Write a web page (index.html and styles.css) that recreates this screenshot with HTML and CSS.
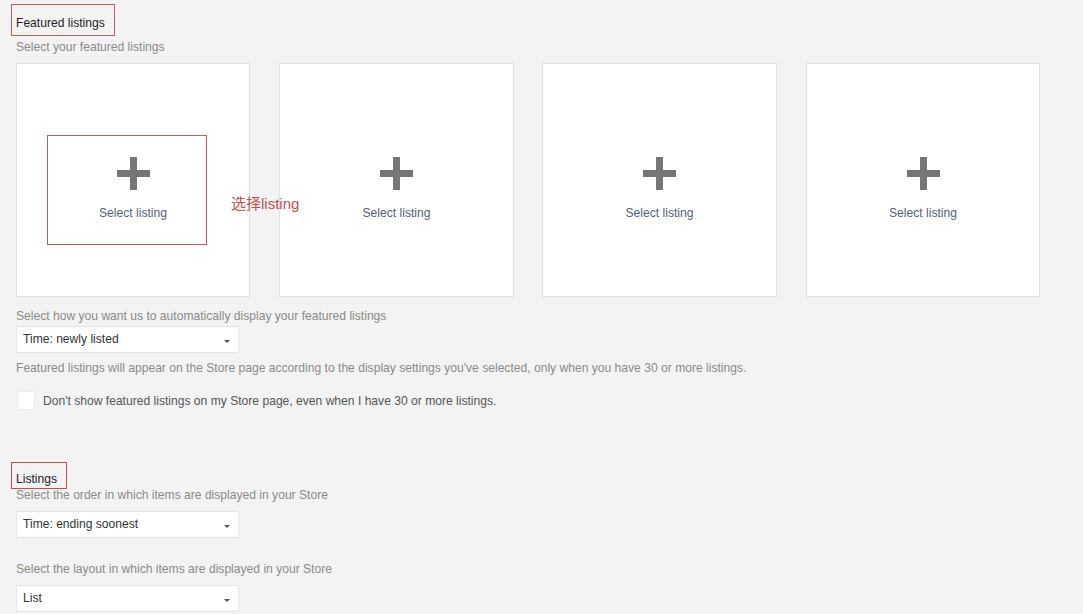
FILE: index.html
```html
<!DOCTYPE html>
<html lang="en">
<head>
    <meta charset="UTF-8">
    <title>Store settings</title>
    <link rel="stylesheet" href="styles.css">
</head>
<body>
<div class="page">
    <div class="section featured">
        <h2 class="title mark">Featured listings</h2>
        <p class="hint">Select your featured listings</p>
        <ul class="cards">
            <li class="card">
                <span class="plus"></span>
                <span class="card-text">Select listing</span>
                <div class="card-mark"></div>
                <span class="note">选择listing</span>
            </li>
            <li class="card">
                <span class="plus"></span>
                <span class="card-text">Select listing</span>
            </li>
            <li class="card">
                <span class="plus"></span>
                <span class="card-text">Select listing</span>
            </li>
            <li class="card">
                <span class="plus"></span>
                <span class="card-text">Select listing</span>
            </li>
        </ul>
        <p class="hint hint-gap">Select how you want us to automatically display your featured listings</p>
        <div class="select">Time: newly listed<span class="caret"></span></div>
        <p class="hint info">Featured listings will appear on the Store page according to the display settings you've selected, only when you have 30 or more listings.</p>
        <label class="check">
            <span class="box"></span>
            <span>Don't show featured listings on my Store page, even when I have 30 or more listings.</span>
        </label>
    </div>
    <div class="section listings">
        <h2 class="title mark mark-small">Listings</h2>
        <p class="hint tight">Select the order in which items are displayed in your Store</p>
        <div class="select select-order">Time: ending soonest<span class="caret"></span></div>
        <p class="hint hint-layout">Select the layout in which items are displayed in your Store</p>
        <div class="select">List<span class="caret"></span></div>
    </div>
</div>
</body>
</html>
```

FILE: styles.css
```css
* {
    padding: 0;
    margin: 0;
    list-style: none;
    box-sizing: border-box;
}

body {
    background: #f3f3f3;
    font-family: "Liberation Sans", Arial, sans-serif;
    font-size: 12.1px;
    color: #333;
    overflow: hidden;
}

.page {
    padding: 4px 0 0 16px;
}

.title {
    font-size: 12.1px;
    font-weight: normal;
    line-height: 16px;
    color: #222;
}

/* red annotation boxes */
.mark {
    display: inline-block;
    margin-left: -5px;
    padding: 10px 9px 4px 4px;
    border: 1px solid #b9615c;
}

.mark-small {
    padding: 8px 9px 1px 4px;
    border-color: #c0504d;
}

.hint {
    color: #8a8a8a;
    line-height: 16px;
}

.featured .hint:first-of-type {
    margin-top: 3px;
}

.cards {
    display: flex;
    gap: 29px;
    margin-top: 8px;
}

.card {
    position: relative;
    width: 234px;
    height: 234px;
    background: #fff;
    border: 1px solid #e2e2e2;
    display: flex;
    flex-direction: column;
    align-items: center;
    padding-top: 93px;
}

.card:nth-child(2),
.card:nth-child(3) {
    width: 235px;
}

.card:nth-child(3) {
    margin-left: -1px;
}

.plus {
    position: relative;
    width: 33px;
    height: 33px;
}

.plus::before,
.plus::after {
    content: "";
    position: absolute;
    background: #767676;
}

.plus::before {
    left: 0;
    top: 13px;
    width: 33px;
    height: 7px;
}

.plus::after {
    left: 13px;
    top: 0;
    width: 7px;
    height: 33px;
}

.card-text {
    margin-top: 15px;
    color: #4f6178;
    line-height: 16px;
}

.card-mark {
    position: absolute;
    left: 30px;
    top: 71px;
    width: 160px;
    height: 110px;
    border: 1px solid #b9615c;
}

.note {
    position: absolute;
    z-index: 1;
    left: 214px;
    top: 128px;
    white-space: nowrap;
    color: #c0504d;
    font-size: 15px;
    font-family: "Liberation Sans", "Noto Sans CJK SC", sans-serif;
}

.hint-gap {
    margin-top: 11px;
}

.select {
    position: relative;
    width: 223px;
    height: 27px;
    margin-top: 2px;
    padding-left: 6px;
    line-height: 25px;
    background: #fff;
    border: 1px solid #e6e6e6;
    color: #333;
}

.caret {
    position: absolute;
    right: 8px;
    top: 13px;
    border-left: 3px solid transparent;
    border-right: 3px solid transparent;
    border-top: 3px solid #555;
}

.info {
    margin-top: 7px;
}

.check {
    display: flex;
    align-items: center;
    gap: 8px;
    margin-top: 15px;
    color: #555;
    line-height: 16px;
}

.check .box {
    width: 18px;
    height: 19px;
    margin-left: 1px;
    background: #fff;
    border: 1px solid #ececec;
    border-radius: 2px;
}

.listings {
    margin-top: 52px;
}

.tight {
    margin-top: -2px;
}

.select-order {
    margin-top: 8px;
}

.hint-layout {
    margin-top: 23px;
    margin-bottom: 8px;
}
```
